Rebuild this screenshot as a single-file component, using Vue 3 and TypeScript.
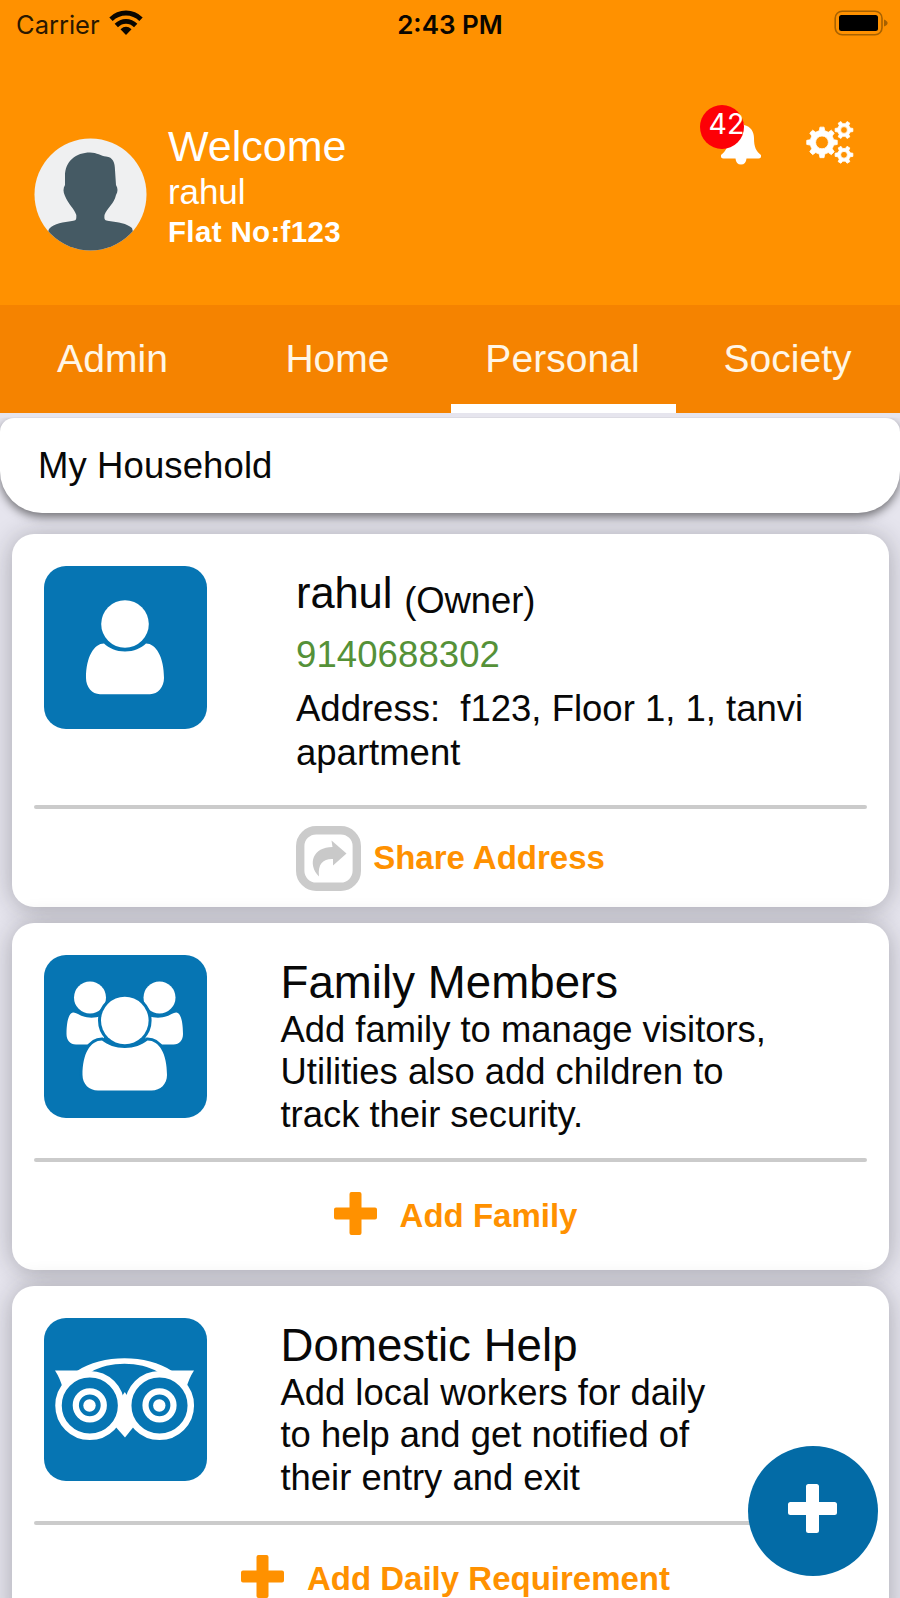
<script setup lang="ts">
import { ref } from 'vue'

interface ServiceCard {
  id: string
  title: string
  lines: string[]
  action: string
}

const tabs: string[] = ['Admin', 'Home', 'Personal', 'Society']
const activeTab = ref<string>('Personal')

const services: ServiceCard[] = [
  {
    id: 'family',
    title: 'Family Members',
    lines: ['Add family to manage visitors,', 'Utilities also add children to', 'track their security.'],
    action: 'Add Family',
  },
  {
    id: 'help',
    title: 'Domestic Help',
    lines: ['Add local workers for daily', 'to help and get notified of', 'their entry and exit'],
    action: 'Add Daily Requirement',
  },
]

// Outline of a cog with a round hole, for fill-rule evenodd
function cog(cx: number, cy: number, outer: number, inner: number, hole: number, teeth: number): string {
  const step = (Math.PI * 2) / teeth
  const points: string[] = []
  for (let i = 0; i < teeth; i++) {
    const mid = i * step
    const corners: [number, number][] = [
      [inner, -0.29],
      [outer, -0.17],
      [outer, 0.17],
      [inner, 0.29],
    ]
    for (const [radius, offset] of corners) {
      const angle = mid + offset * step
      points.push(`${(cx + radius * Math.cos(angle)).toFixed(2)} ${(cy + radius * Math.sin(angle)).toFixed(2)}`)
    }
  }
  return `M${points.join('L')}ZM${cx - hole} ${cy}a${hole} ${hole} 0 1 0 ${hole * 2} 0a${hole} ${hole} 0 1 0 ${-hole * 2} 0Z`
}

const cogs: string = [
  cog(17, 21.4, 15.4, 12, 6.4, 8),
  cog(39, 9, 9, 6.5, 3.4, 6),
  cog(39, 33.8, 9, 6.5, 3.4, 6),
].join('')
</script>

<template>
  <div class="screen">
    <header class="header">
      <div class="status">
        <div class="carrier">
          <span>Carrier</span>
          <svg class="wifi" width="34" height="26" viewBox="0 0 34 26">
            <g fill="none" stroke="#0a0600" stroke-width="4.8">
              <path d="M2 9.2C10.500 .9 23.500 .9 32 9.200" />
              <path d="M7.300 15.400C13 10 21 10 26.700 15.400" />
            </g>
            <path d="M11.500 19.200Q17 14.500 22.500 19.200L17 25Z" fill="#0a0600" />
          </svg>
        </div>
        <div class="clock">2:43 PM</div>
        <svg class="battery" width="54" height="26" viewBox="0 0 54 26">
          <rect x="1.200" y="1.200" width="46.800" height="23.600" rx="7" fill="none" stroke="#a86200" stroke-width="1.600" />
          <rect x="5" y="5" width="39" height="16" rx="2.500" fill="#000" />
          <path d="M50 9.500Q53.600 11 53.600 13Q53.600 15 50 16.500Z" fill="#a76100" />
        </svg>
      </div>
      <div class="profile">
        <svg class="avatar" width="113" height="113" viewBox="0 0 113 113">
          <defs>
            <clipPath id="face"><circle cx="56.500" cy="56.500" r="56" /></clipPath>
          </defs>
          <circle cx="56.500" cy="56.500" r="56" fill="#eff0f1" />
          <path
            clip-path="url(#face)"
            fill="#455a64"
            d="M56 14.500C63 14.500 67 18 72 18.500C79 19 81 25 81 32L82 47C84 50 84 54 82 57C80 66 73 70 70.500 77C70 82 71 82.500 75 83C84 84 93 85.500 98 90L104 113H8L15 91C20 85.500 30 84 38 83C42 82.500 42.500 82 42.300 77C40 70 34 66 31 58C29 54 29 50 31 47L31 38C31 23 42 14.500 56 14.500Z"
          />
        </svg>
        <div class="who">
          <div class="welcome">Welcome</div>
          <div class="username">rahul</div>
          <div class="flat">Flat No:f123</div>
        </div>
        <div class="tools">
          <div class="alerts">
            <svg width="42" height="44" viewBox="0 0 42 44">
              <path
                fill="#fff"
                d="M21 1C23 1 24 2.500 24 4C31 5.500 34 11 34 17C34 26 36 30 41 34Q41.500 37.500 38.500 37.500H26.500Q26 43.500 21 43.500Q16 43.500 15.500 37.500H3.500Q.5 37.500 1 34C6 30 8 26 8 17C8 11 11 5.500 18 4C18 2.500 19 1 21 1Z"
              />
            </svg>
            <span class="badge">42</span>
          </div>
          <svg class="cogs" width="49" height="44" viewBox="0 0 49 44">
            <path :d="cogs" fill="#fff" stroke="#fff" stroke-width=".8" stroke-linejoin="round" fill-rule="evenodd" />
          </svg>
        </div>
      </div>
    </header>

    <nav class="tabs">
      <button
        v-for="tab in tabs"
        :key="tab"
        class="tab"
        :class="{ active: tab === activeTab }"
        @click="activeTab = tab"
      >
        {{ tab }}
      </button>
    </nav>

    <main class="content">
      <h1 class="section">My Household</h1>

      <article class="card owner">
        <div class="body">
          <svg class="tile" width="163" height="163" viewBox="0 0 163 163">
            <rect width="163" height="163" rx="22" fill="#0675b3" />
            <path
              fill="#fff"
              d="M60 77.500C50 77.500 42 91 42 112C42 121 48 128.200 56 128.200H106C114 128.200 120 121 120 112C120 91 112 77.500 102 77.500C97 82 90 85.500 81 85.500C72 85.500 65 82 60 77.500Z"
            />
            <circle cx="81" cy="58" r="23.800" fill="#fff" />
          </svg>
          <div class="details">
            <div class="name">rahul <span class="role">(Owner)</span></div>
            <div class="phone">9140688302</div>
            <div class="address">Address:&nbsp; f123, Floor 1, 1, tanvi<br />apartment</div>
          </div>
        </div>
        <div class="divider"></div>
        <button class="action share">
          <svg width="65" height="65" viewBox="0 0 65 65">
            <rect x="4.200" y="4.200" width="56.600" height="56.600" rx="16" fill="none" stroke="#cbcbcb" stroke-width="8.400" />
            <path
              fill="#c9c9c9"
              d="M35.500 14.500L50.500 27.500L37 39.500V33C28 32.500 21.500 37 23 50.500C11 38 17 21 36.500 21Z"
            />
          </svg>
          <span>Share Address</span>
        </button>
      </article>

      <article v-for="card in services" :key="card.id" class="card service">
        <div class="body">
          <svg v-if="card.id === 'family'" class="tile" width="163" height="163" viewBox="0 0 163 163">
            <rect width="163" height="163" rx="22" fill="#0675b3" />
            <g fill="#fff">
              <circle cx="46" cy="42.500" r="16" />
              <circle cx="115.500" cy="42.500" r="16" />
              <path d="M29 57.500C25 58 22.500 66 22.500 79C22.500 85 26 89.500 32 89.500H60V60Q46 66 34 59Q31 57.300 29 57.500Z" />
              <path d="M132.500 57.500C136.500 58 139 66 139 79C139 85 135.500 89.500 129.500 89.500H101.500V60Q115.500 66 127.500 59Q130.500 57.300 132.500 57.500Z" />
            </g>
            <g fill="#fff" stroke="#0675b3" stroke-width="6" paint-order="stroke">
              <path
                d="M58 85.500C46 85.500 38.500 99 38.500 120C38.500 129 45 135.500 54 135.500H107.500C116.500 135.500 123 129 123 120C123 99 115.500 85.500 103.500 85.500C98 90 90 93 80.800 93C71.500 93 63.500 90 58 85.500Z"
              />
              <circle cx="80.800" cy="65.500" r="23.800" />
            </g>
          </svg>
          <svg v-else class="tile" width="163" height="163" viewBox="0 0 163 163">
            <rect width="163" height="163" rx="22" fill="#0675b3" />
            <path fill="#fff" d="M11 52.500H45L30 66L18.500 70Q16.500 61 11 52.500Z" />
            <path fill="#fff" d="M150 52.500H116L131 66L142.500 70Q144.500 61 150 52.500Z" />
            <path fill="#fff" d="M33 53C58 36 103 36 128 53L114 54C96 43 65 43 47 54Z" />
            <path fill="#fff" d="M76 81L80.800 74L85.500 81L91 107L81 119.500L70 107Z" />
            <g fill="#0675b3" stroke="#fff" stroke-width="6.500">
              <circle cx="45.800" cy="87.500" r="31.300" />
              <circle cx="115.500" cy="87.500" r="31.300" />
            </g>
            <g fill="none" stroke="#fff" stroke-width="6.200">
              <circle cx="45.800" cy="87.300" r="14" />
              <circle cx="115.500" cy="87.300" r="14" />
            </g>
            <g fill="#fff">
              <circle cx="45.500" cy="87.500" r="6.200" />
              <circle cx="115.300" cy="87.500" r="6.200" />
            </g>
          </svg>
          <div class="details">
            <h2 class="title">{{ card.title }}</h2>
            <p class="text">
              <span v-for="line in card.lines" :key="line">{{ line }}</span>
            </p>
          </div>
        </div>
        <div class="divider"></div>
        <button class="action add">
          <svg width="43" height="43" viewBox="0 0 43 43">
            <path
              fill="#ff9100"
              d="M17.500 0H25.500Q27.500 0 27.500 2V15.500H41Q43 15.500 43 17.500V25.500Q43 27.500 41 27.500H27.500V41Q27.500 43 25.500 43H17.500Q15.500 43 15.500 41V27.500H2Q0 27.500 0 25.500V17.500Q0 15.500 2 15.500H15.500V2Q15.500 0 17.500 0Z"
            />
          </svg>
          <span>{{ card.action }}</span>
        </button>
      </article>
    </main>

    <button class="fab" aria-label="Add">
      <svg width="49" height="49" viewBox="0 0 49 49">
        <path
          fill="#fff"
          d="M20.500 0H28.500Q31 0 31 2.500V18H46.500Q49 18 49 20.500V28.500Q49 31 46.500 31H31V46.500Q31 49 28.500 49H20.500Q18 49 18 46.500V31H2.500Q0 31 0 28.500V20.500Q0 18 2.500 18H18V2.500Q18 0 20.500 0Z"
        />
      </svg>
    </button>
  </div>
</template>

<style>
body {
  margin: 0;
  overflow: hidden;
}
</style>

<style scoped>
.screen {
  position: relative;
  width: 900px;
  height: 1598px;
  overflow: hidden;
  background: #e6e5ee;
  color: #080808;
  font-family: 'Liberation Sans', Arial, sans-serif;
}
button {
  border: 0;
  margin: 0;
  padding: 0;
  background: none;
  font-family: inherit;
}
.header {
  height: 305px;
  background: #ff9100;
}
.status {
  display: grid;
  grid-template-columns: 1fr auto 1fr;
  height: 48px;
  padding: 0 12px 0 16px;
  box-sizing: border-box;
  align-items: center;
  font-family: Inter, sans-serif;
  font-size: 26px;
  color: #0a0600;
}
.carrier {
  display: flex;
  align-items: center;
  gap: 9px;
  color: #2a1800;
  font-size: 25.5px;
}
.wifi {
  margin-top: -3px;
}
.clock {
  margin-left: -4px;
  font-weight: 600;
}
.battery {
  justify-self: end;
  margin-top: -2px;
}
.profile {
  display: flex;
  padding: 0 46px 0 33.5px;
  color: #fff;
}
.avatar {
  margin-top: 89.5px;
}
.who {
  flex: 1;
  margin: 74px 0 0 21.500px;
}
.welcome {
  font-size: 43px;
  line-height: 49px;
}
.username {
  font-size: 35px;
  line-height: 42px;
  letter-spacing: -0.1px;
}
.flat {
  font-size: 29.5px;
  font-weight: 700;
  line-height: 38px;
  letter-spacing: 0.35px;
}
.tools {
  display: flex;
  align-items: flex-start;
  gap: 43px;
  padding-top: 73px;
}
.alerts {
  position: relative;
  height: 44px;
}
.badge {
  position: absolute;
  left: -20px;
  top: -16px;
  width: 44px;
  height: 44px;
  border-radius: 50%;
  background: #fd0006;
  font-family: Inter, sans-serif;
  font-size: 28.5px;
  font-weight: 400;
  line-height: 38px;
  text-indent: 8.5px;
}
.tabs {
  display: grid;
  grid-template-columns: repeat(4, 1fr);
  height: 108px;
  background: #f58300;
}
.tab {
  position: relative;
  padding-bottom: 1px;
  color: #fff6e6;
  font-size: 39px;
  letter-spacing: 0.05px;
}
.tab.active::after {
  content: '';
  position: absolute;
  left: 1px;
  right: -1px;
  bottom: 0;
  height: 9px;
  background: #fff;
}
.content {
  display: flex;
  flex-direction: column;
  padding-top: 4.5px;
}
.section {
  flex: none;
  height: 95px;
  margin: 0 0 21.5px;
  padding-left: 38px;
  box-sizing: border-box;
  border-radius: 14px 14px 42px 42px;
  background: #fff;
  box-shadow: 0 4px 10px rgba(0, 0, 0, 0.5);
  clip-path: inset(0 0 -22px 0);
  font-size: 36.5px;
  font-weight: 400;
  line-height: 95px;
  letter-spacing: 0.1px;
}
.card {
  flex: none;
  margin: 0 11px 15.5px 12px;
  height: 347.5px;
  box-sizing: border-box;
  border-radius: 22px;
  background: #fff;
  box-shadow: 0 2px 26px rgba(30, 28, 36, 0.31);
}
.card.owner {
  height: 373px;
}
.body {
  display: flex;
  height: 235px;
  padding-left: 32px;
}
.owner .body {
  height: 271px;
}
.tile {
  flex: none;
  margin-top: 32px;
}
.details {
  margin: 34px 0 0 73.5px;
}
.owner .details {
  margin-left: 89px;
}
.name {
  height: 55px;
  padding-top: 1px;
  font-size: 43.5px;
  line-height: 48px;
  letter-spacing: -0.1px;
  white-space: nowrap;
}
.role {
  position: relative;
  top: 5px;
  font-size: 36.5px;
  letter-spacing: -0.1px;
}
.phone {
  margin-top: 3px;
  color: #559138;
  font-size: 36.5px;
  line-height: 55px;
  letter-spacing: 0.1px;
}
.address {
  margin-top: 5px;
  font-size: 36.5px;
  line-height: 43.5px;
  letter-spacing: 0;
  white-space: nowrap;
}
.title {
  margin: 1px 0 0;
  font-size: 45.6px;
  font-weight: 400;
  line-height: 50px;
  letter-spacing: 0.05px;
}
.text {
  display: flex;
  flex-direction: column;
  margin: 1px 0 0;
  font-size: 36.4px;
  line-height: 42.8px;
  white-space: nowrap;
}
.divider {
  height: 4px;
  margin: 0 22px;
  border-radius: 2px;
  background: #cbcbcb;
}
.action {
  display: flex;
  align-items: center;
  justify-content: center;
  width: 100%;
  height: 98px;
  color: #ff9100;
  font-size: 33px;
  font-weight: 700;
}
.share {
  gap: 12px;
}
.add {
  height: 108px;
  gap: 23px;
  padding-left: 10px;
}
.add svg {
  margin-top: -4px;
}
.fab {
  position: absolute;
  left: 748px;
  top: 1445.5px;
  display: flex;
  align-items: center;
  justify-content: center;
  width: 130px;
  height: 130px;
  padding: 0 2px 4px 0;
  box-sizing: border-box;
  border-radius: 50%;
  background: #036ba6;
}
</style>
